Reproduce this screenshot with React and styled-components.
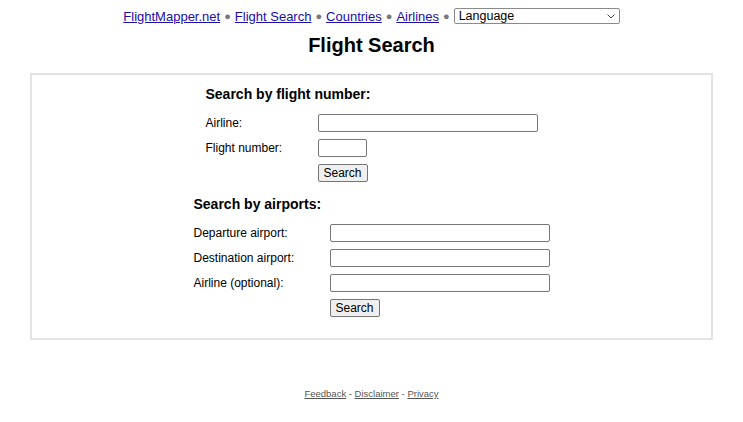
import React from "react";
import styled, { createGlobalStyle } from "styled-components";

const GlobalStyle = createGlobalStyle`
  body {
    margin: 8px;
    font-family: "Liberation Sans", Arial, sans-serif;
    color: #000;
    background: #fff;
  }
`;

const Nav = styled.div`
  display: flex;
  justify-content: center;
  align-items: center;
  gap: 4px;
  font-size: 13px;
  height: 16px;
  a {
    color: #1a0dab;
    text-decoration: underline;
  }
`;

const Dot = styled.span`
  color: #777;
  font-size: 11px;
`;

const SelectWrap = styled.span`
  position: relative;
  display: inline-flex;
`;

const LangSelect = styled.select`
  appearance: none;
  width: 166px;
  height: 16px;
  font-family: "Liberation Sans", Arial, sans-serif;
  font-size: 12.5px;
  line-height: 14px;
  padding: 0 4px;
  border: 1px solid #8a8a8a;
  border-radius: 2px;
  background: #fff;
  color: #000;
`;

const Chevron = styled.svg`
  position: absolute;
  right: 5px;
  top: 6px;
  pointer-events: none;
`;

const Title = styled.h1`
  text-align: center;
  font-size: 20px;
  margin: 10px 0 16px;
`;

const Box = styled.div`
  border: 2px solid #e3e3e3;
  margin: 0 22px;
  padding: 11px 0 21px;
  display: flex;
  flex-direction: column;
  align-items: center;
`;

const Form = styled.div`
  display: grid;
  grid-template-columns: ${(p) => p.$labelWidth}px auto;
  row-gap: 7px;
  align-items: center;
  font-size: 12px;
  margin-bottom: ${(p) => p.$bottom || 0}px;
`;

const Heading = styled.div`
  grid-column: 1 / 3;
  font-weight: bold;
  font-size: 14px;
  margin-bottom: 5px;
`;

const TextInput = styled.input`
  box-sizing: border-box;
  width: ${(p) => p.$w}px;
  height: 18px;
  border: 1px solid #767676;
  border-radius: 2px;
  padding: 0 2px;
`;

const Button = styled.button`
  grid-column: 2;
  justify-self: start;
  box-sizing: border-box;
  height: 18px;
  padding: 0 5px;
  font-family: "Liberation Sans", Arial, sans-serif;
  font-size: 12px;
  border: 1px solid #767676;
  border-radius: 2px;
  background: #efefef;
  color: #000;
`;

const Footer = styled.div`
  text-align: center;
  font-size: 9.5px;
  color: #555;
  margin-top: 48px;
  a {
    color: #555;
  }
`;

export default function App() {
  return (
    <>
      <GlobalStyle />
      <Nav>
        <a href="#">FlightMapper.net</a>
        <Dot>●</Dot>
        <a href="#">Flight Search</a>
        <Dot>●</Dot>
        <a href="#">Countries</a>
        <Dot>●</Dot>
        <a href="#">Airlines</a>
        <Dot>●</Dot>
        <SelectWrap>
          <LangSelect defaultValue="lang">
            <option value="lang">Language</option>
          </LangSelect>
          <Chevron width="8" height="5" viewBox="0 0 8 5">
            <path d="M0.5 0.5 L4 4 L7.5 0.5" fill="none" stroke="#444" strokeWidth="1" />
          </Chevron>
        </SelectWrap>
      </Nav>
      <Title>Flight Search</Title>
      <Box>
        <Form $labelWidth={112} $bottom={14}>
          <Heading>Search by flight number:</Heading>
          <span>Airline:</span>
          <TextInput $w={220} />
          <span>Flight number:</span>
          <TextInput $w={49} />
          <Button>Search</Button>
        </Form>
        <Form $labelWidth={136}>
          <Heading>Search by airports:</Heading>
          <span>Departure airport:</span>
          <TextInput $w={220} />
          <span>Destination airport:</span>
          <TextInput $w={220} />
          <span>Airline (optional):</span>
          <TextInput $w={220} />
          <Button>Search</Button>
        </Form>
      </Box>
      <Footer>
        <a href="#">Feedback</a> - <a href="#">Disclaimer</a> -{" "}
        <a href="#">Privacy</a>
      </Footer>
    </>
  );
}
